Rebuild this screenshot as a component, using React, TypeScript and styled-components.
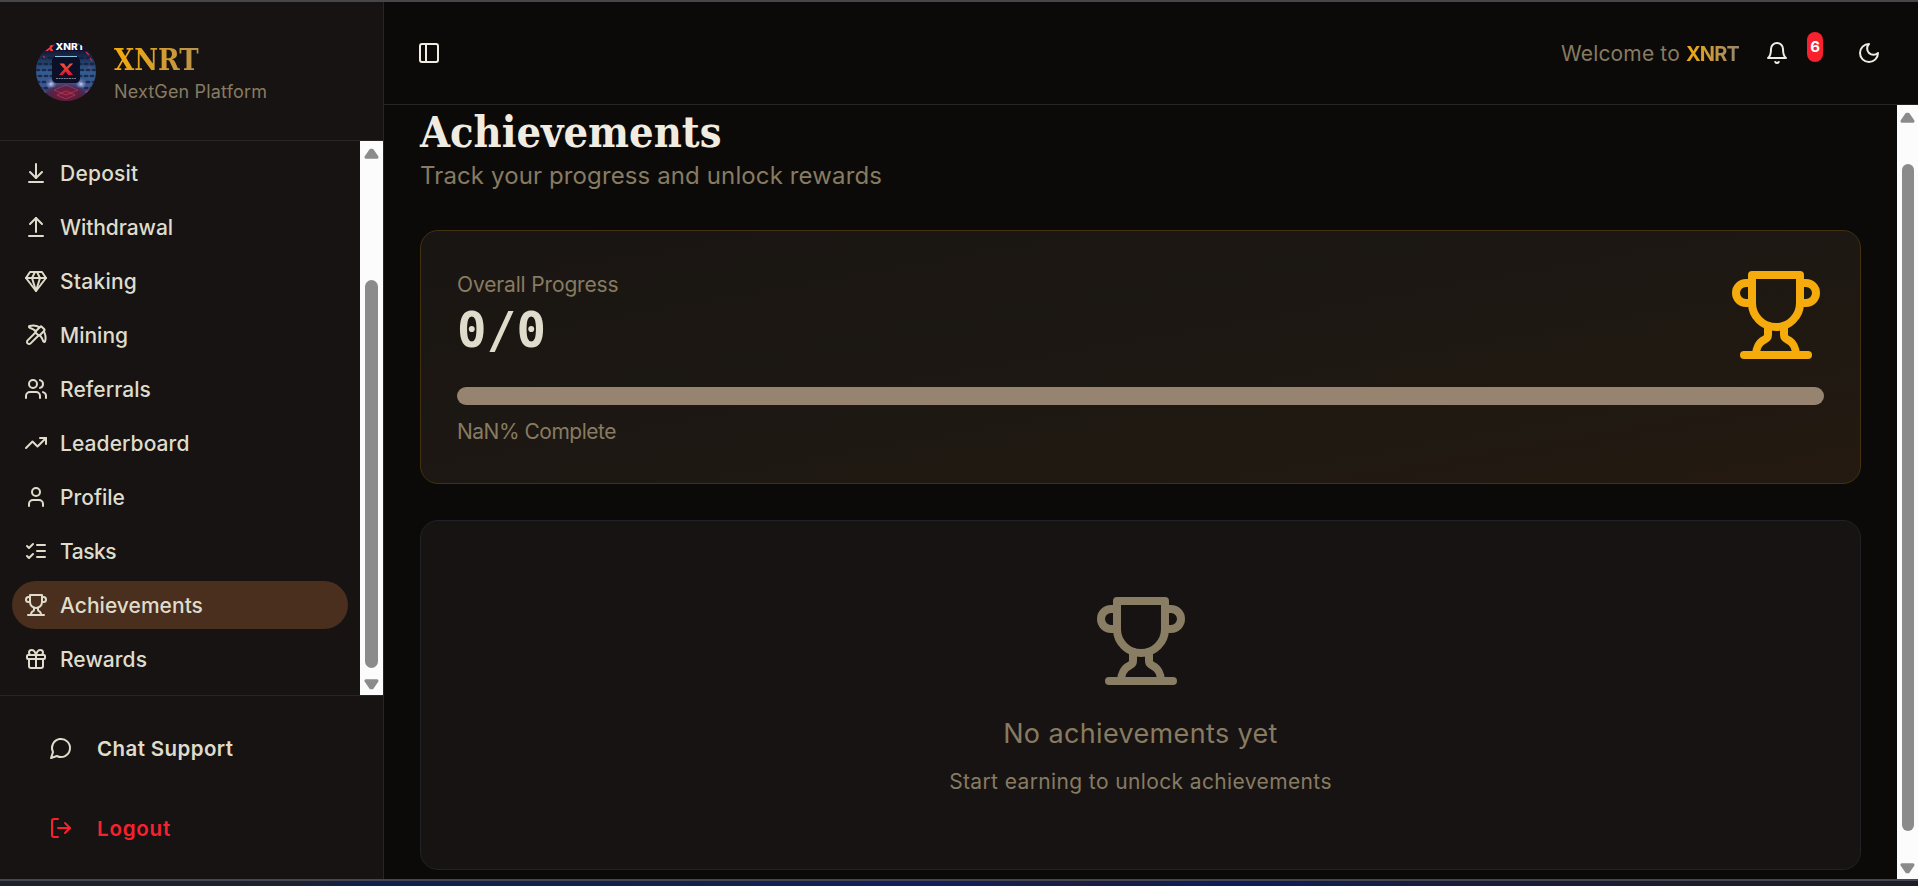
import React from 'react';
import styled, { createGlobalStyle, css } from 'styled-components';

const color = {
  page: '#0b0a08',
  panel: '#171312',
  line: '#2a2423',
  text: '#dfdccb',
  bright: '#f0ece2',
  muted: '#877b61',
  amber: '#f5ab0c',
  red: '#f8212e',
  active: '#4a2e1e',
  track: '#978470',
};

const GlobalStyle = createGlobalStyle`
  *, *::before, *::after { box-sizing: border-box; }
  body { margin: 0; background: ${color.page}; font-family: Inter, sans-serif; overflow: hidden; }
  h1, p { margin: 0; }
`;

const Window = styled.div`
  display: flex;
  flex-direction: column;
  height: 886px;
  width: 1918px;
  border-top: 2px solid #45474b;
  color: ${color.text};
`;

const Shell = styled.div`
  display: flex;
  flex: none;
  height: 877px;
`;

const Taskbar = styled.div`
  flex: 1;
  border-top: 2px solid #45464f;
  background: linear-gradient(90deg, #1c222b 0, #1a2230 300px, #10204f 370px, #14204c 700px, #10205e 920px, #1b1d40 1080px, #0d1d5a 1230px, #181d40 1400px, #1c1d2b 1700px, #1c1c28 100%);
`;

const Sidebar = styled.aside`
  display: flex;
  flex-direction: column;
  width: 384px;
  background: ${color.panel};
  border-right: 1px solid ${color.line};
`;

const Brand = styled.div`
  display: flex;
  align-items: center;
  gap: 18px;
  height: 139px;
  padding: 0 36px;
  border-bottom: 1px solid ${color.line};
`;

const BrandText = styled.div`
  display: flex;
  flex-direction: column;
  padding-top: 3px;
`;

const goldText = css`
  background: linear-gradient(90deg, #f5ab0c, #978470);
  -webkit-background-clip: text;
  background-clip: text;
  color: transparent;
`;

const BrandName = styled.span`
  ${goldText}
  width: 130px;
  font: 700 29px/38px 'DejaVu Serif Condensed', 'DejaVu Serif', serif;
`;

const BrandTag = styled.span`
  font-size: 18px;
  line-height: 26px;
  letter-spacing: 0.16px;
  color: ${color.muted};
`;

const NavArea = styled.div`
  display: flex;
  height: 554px;
`;

const NavList = styled.nav`
  display: flex;
  flex: 1;
  flex-direction: column;
  gap: 6px;
  padding: 8px 12px 12px;
`;

const NavItem = styled.a<{ $active?: boolean; $spacing: number }>`
  display: flex;
  align-items: center;
  gap: 12px;
  height: 48px;
  padding: 0 12px;
  border-radius: 24px;
  font-size: 21px;
  font-weight: 500;
  letter-spacing: ${(p) => p.$spacing}px;
  background: ${(p) => (p.$active ? color.active : 'transparent')};
`;

const SidebarFooter = styled.div`
  display: flex;
  flex: 1;
  flex-direction: column;
  gap: 20px;
  padding: 22px 24px 0;
  border-top: 1px solid ${color.line};
`;

const FooterButton = styled.button<{ $danger?: boolean; $spacing: number }>`
  display: flex;
  align-items: center;
  gap: 24px;
  height: 60px;
  padding: 0 25px;
  border: 0;
  background: none;
  font: 600 20.5px Inter, sans-serif;
  letter-spacing: ${(p) => p.$spacing}px;
  color: ${(p) => (p.$danger ? color.red : color.text)};
`;

const Main = styled.div`
  display: flex;
  flex: 1;
  flex-direction: column;
  background: ${color.page};
`;

const TopBar = styled.header`
  display: flex;
  align-items: center;
  justify-content: space-between;
  height: 103px;
  padding: 0 22px 0 18px;
  border-bottom: 1px solid ${color.line};
`;

const TopActions = styled.div`
  display: flex;
  align-items: center;
`;

const Welcome = styled.p`
  margin-right: 11px;
  font-size: 21px;
  letter-spacing: 0.16px;
  color: ${color.muted};
`;

const WelcomeName = styled.span`
  ${goldText}
  display: inline-block;
  width: 53px;
  font-size: 20px;
  font-weight: 700;
  letter-spacing: -0.9px;
`;

const IconButton = styled.button`
  position: relative;
  display: flex;
  align-items: center;
  justify-content: center;
  width: 54px;
  height: 54px;
  padding: 0;
  border: 0;
  background: none;
  color: ${color.bright};
`;

const BellButton = styled(IconButton)`
  margin-right: 38px;
`;

const Badge = styled.span`
  position: absolute;
  top: 6px;
  left: 57px;
  width: 16px;
  height: 30px;
  border-radius: 8px;
  background: ${color.red};
  color: #fff;
  text-align: center;
  font: 700 15px/30px Inter, sans-serif;
`;

const Viewport = styled.div`
  display: flex;
  flex: 1;
  min-height: 0;
`;

const Content = styled.main`
  display: flex;
  flex: 1;
  flex-direction: column;
  gap: 36px;
  padding: 1px 36px 0;
`;

const Title = styled.h1`
  font: 700 43px/52px 'DejaVu Serif Condensed', 'DejaVu Serif', serif;
  color: ${color.bright};
`;

const Subtitle = styled.p`
  font-size: 24px;
  line-height: 36px;
  letter-spacing: 0.12px;
  color: ${color.muted};
`;

const ProgressCard = styled.section`
  height: 254px;
  padding: 36px;
  border: 1px solid #43310f;
  border-radius: 18px;
  background: linear-gradient(to bottom right, #191513, #1d1812 55%, #241a11);
`;

const ProgressHead = styled.div`
  display: flex;
  align-items: center;
  justify-content: space-between;
  height: 96px;
`;

const Caption = styled.p<{ $spacing: number }>`
  font-size: 21px;
  line-height: 30px;
  letter-spacing: ${(p) => p.$spacing}px;
  color: ${color.muted};
`;

const Count = styled.p`
  padding-top: 2px;
  font: 700 49px/58px 'DejaVu Sans Mono', monospace;
  letter-spacing: 0.3px;
`;

const Bar = styled.div`
  height: 18px;
  margin: 24px 0 12px;
  border-radius: 9px;
  background: ${color.track};
`;

const EmptyCard = styled.section`
  display: flex;
  flex-direction: column;
  align-items: center;
  height: 350px;
  padding: 72px 36px;
  border: 1px solid #212228;
  border-radius: 18px;
  background: ${color.panel};
`;

const EmptyTitle = styled.p`
  margin: 24px 0 12px;
  font-size: 27px;
  line-height: 42px;
  letter-spacing: 0.36px;
  color: ${color.muted};
`;

const Rail = styled.div<{ $width: number }>`
  display: flex;
  flex: none;
  flex-direction: column;
  align-items: center;
  width: ${(p) => p.$width}px;
  padding: 7px 0 5px;
  background: #fcfcfc;
`;

const Thumb = styled.div<{ $width: number; $top: number; $height: number }>`
  width: ${(p) => p.$width}px;
  height: ${(p) => p.$height}px;
  margin: ${(p) => p.$top}px 0 auto;
  border-radius: 7px;
  background: #8b8b8b;
`;

const Svg = styled.svg`
  display: block;
  flex: none;
`;

const Arrow = ({ down }: { down?: boolean }) => (
  <Svg width="15" height="11" viewBox="0 0 15 11">
    <path
      d={down ? 'M2 1.800h11L8.200 8.800h-1.400Z' : 'M2 9.200h11L8.200 2.200h-1.400Z'}
      fill="#8b8b8b"
      stroke="#8b8b8b"
      strokeWidth="3"
      strokeLinejoin="round"
    />
  </Svg>
);

const shapes = {
  deposit: ['M12 17V3', 'm6 11 6 6 6-6', 'M19 21H5'],
  withdrawal: ['m18 9-6-6-6 6', 'M12 3v14', 'M5 21h14'],
  gem: ['M6 3h12l4 6-10 13L2 9Z', 'M11 3 8 9l4 13 4-13-3-6', 'M2 9h20'],
  pickaxe: [
    'M14.531 12.469 6.619 20.38a1 1 0 1 1-3-3l7.912-7.912',
    'M15.686 4.314A12.5 12.5 0 0 0 5.461 2.958 1 1 0 0 0 5.58 4.71a22 22 0 0 1 6.318 3.393',
    'M17.7 3.7a1 1 0 0 0-1.4 0l-4.6 4.6a1 1 0 0 0 0 1.4l2.6 2.6a1 1 0 0 0 1.4 0l4.6-4.6a1 1 0 0 0 0-1.4z',
    'M19.686 8.314a12.501 12.501 0 0 1 1.356 10.225 1 1 0 0 1-1.751-.119 22 22 0 0 0-3.393-6.319',
  ],
  users: [
    'M16 21v-2a4 4 0 0 0-4-4H6a4 4 0 0 0-4 4v2',
    'M13 7a4 4 0 1 1-8 0a4 4 0 0 1 8 0',
    'M22 21v-2a4 4 0 0 0-3-3.87',
    'M16 3.13a4 4 0 0 1 0 7.75',
  ],
  trend: ['m22 7-8.5 8.5-5-5L2 17', 'M16 7h6v6'],
  user: ['M19 21v-2a4 4 0 0 0-4-4H9a4 4 0 0 0-4 4v2', 'M16 7a4 4 0 1 1-8 0a4 4 0 0 1 8 0'],
  tasks: ['m3 17 2 2 4-4', 'm3 7 2 2 4-4', 'M13 6h8', 'M13 12h8', 'M13 18h8'],
  trophy: [
    'M6 9H4.5a2.5 2.5 0 0 1 0-5H6',
    'M18 9h1.5a2.5 2.5 0 0 0 0-5H18',
    'M4 22h16',
    'M10 14.66V17c0 .55-.47.98-.97 1.21C7.85 18.75 7 20.24 7 22',
    'M14 14.66V17c0 .55.47.98.97 1.21C16.15 18.75 17 20.24 17 22',
    'M18 2H6v7a6 6 0 0 0 12 0V2Z',
  ],
  gift: [
    'M4 8h16a1 1 0 0 1 1 1v2a1 1 0 0 1-1 1H4a1 1 0 0 1-1-1V9a1 1 0 0 1 1-1Z',
    'M12 8v13',
    'M19 12v7a2 2 0 0 1-2 2H7a2 2 0 0 1-2-2v-7',
    'M7.5 8a2.5 2.5 0 0 1 0-5A4.8 8 0 0 1 12 8a4.8 8 0 0 1 4.5-5 2.5 2.5 0 0 1 0 5',
  ],
  chat: ['M7.9 20A9 9 0 1 0 4 16.1L2 22Z'],
  logout: ['M9 21H5a2 2 0 0 1-2-2V5a2 2 0 0 1 2-2h4', 'm16 17 5-5-5-5', 'M21 12H9'],
  panel: ['M5 3h14a2 2 0 0 1 2 2v14a2 2 0 0 1-2 2H5a2 2 0 0 1-2-2V5a2 2 0 0 1 2-2Z', 'M9 3v18'],
  bell: ['M6 8a6 6 0 0 1 12 0c0 7 3 9 3 9H3s3-2 3-9', 'M10.3 21a1.94 1.94 0 0 0 3.4 0'],
  moon: ['M12 3a6 6 0 0 0 9 9 9 9 0 1 1-9-9Z'],
};

const Icon = ({ name, size = 24, stroke = 'currentColor' }: { name: keyof typeof shapes; size?: number; stroke?: string }) => (
  <Svg width={size} height={size} viewBox="0 0 24 24" fill="none" stroke={stroke} strokeWidth="2" strokeLinecap="round" strokeLinejoin="round">
    {shapes[name].map((d) => (
      <path key={d} d={d} />
    ))}
  </Svg>
);

const scales = [0, 1, 2, 3, 4, 5].flatMap((row) =>
  [0, 1, 2].flatMap((col) => [
    { x: 2 + col * 6 + (row % 2) * 2, y: 17 + row * 6 },
    { x: 58 - col * 6 - (row % 2) * 2, y: 17 + row * 6 },
  ]),
);

const Logo = () => (
  <Svg width="60" height="60" viewBox="0 0 60 60">
    <defs>
      <clipPath id="disc"><circle cx="30" cy="30" r="30" /></clipPath>
      <linearGradient id="sky" x1="0" y1="0" x2="0" y2="1">
        <stop offset="0" stopColor="#0d1230" />
        <stop offset="0.2" stopColor="#15203f" />
        <stop offset="0.5" stopColor="#335c8e" />
        <stop offset="0.75" stopColor="#3b5590" />
        <stop offset="1" stopColor="#2a1c3c" />
      </linearGradient>
      <radialGradient id="glow">
        <stop offset="0" stopColor="#8d1836" />
        <stop offset="0.6" stopColor="#641a3a" stopOpacity="0.85" />
        <stop offset="1" stopColor="#4b2250" stopOpacity="0" />
      </radialGradient>
      <radialGradient id="lamp">
        <stop offset="0" stopColor="#cfd0f4" />
        <stop offset="1" stopColor="#7d8fd0" stopOpacity="0" />
      </radialGradient>
      <linearGradient id="mark" x1="0" y1="0" x2="0" y2="1">
        <stop offset="0" stopColor="#f8532f" />
        <stop offset="1" stopColor="#dd1638" />
      </linearGradient>
    </defs>
    <g clipPath="url(#disc)">
      <rect width="60" height="60" fill="url(#sky)" />
      {scales.map((s) => (
        <ellipse key={`${s.x}-${s.y}`} cx={s.x} cy={s.y} rx="2.6" ry="1.2" fill="#101c3c" opacity="0.75" />
      ))}
      <ellipse cx="30" cy="53" rx="23" ry="12" fill="url(#glow)" />
      <circle cx="15" cy="43" r="5.500" fill="url(#lamp)" />
      <circle cx="45" cy="43" r="5.500" fill="url(#lamp)" />
      <path d="M18 49l12-5 12 5-12 5ZM21 54l9-4 9 4-9 4Z" fill="none" stroke="#e07a98" strokeWidth="0.6" opacity="0.5" />
      <path d="M50 11l3 3M54 17l2 3M7 15l2 2M52 26l3 1M5 50l5 1M49 51l4-1" stroke="#c52e4d" strokeWidth="1.3" />
      <rect width="60" height="10" fill="#0e1230" />
      <rect x="16" y="15" width="28" height="27" rx="4.5" fill="#0b1026" />
      <path d="M19 15.5h22" stroke="#8fc1dc" strokeWidth="1" />
      <path d="M23.500 22.500h4.500l2.500 3.700 3.500-3.700h3.200l-5.200 5.600 5 6h-4.800l-2.500-3.700-3.200 3.700H23l5.300-6Z" fill="url(#mark)" />
      <path d="M20 37.500h20" stroke="#b9bccb" strokeWidth="0.800" strokeDasharray="2 0.600" opacity="0.800" />
      <path d="M9 10l5-4-2-3h3l1.500 1.500L19 3l-3.500 4 2 3h-3l-1-1.500L12 10Z" fill="#ee3b36" />
      <text x="19.500" y="9.200" fill="#fff" fontFamily="Inter, sans-serif" fontWeight="800" fontSize="9.300" textLength="29" lengthAdjust="spacingAndGlyphs">XNRT</text>
    </g>
  </Svg>
);

const navItems: { label: string; icon: keyof typeof shapes; spacing: number; active?: boolean }[] = [
  { label: 'Deposit', icon: 'deposit', spacing: 0.22 },
  { label: 'Withdrawal', icon: 'withdrawal', spacing: -0.07 },
  { label: 'Staking', icon: 'gem', spacing: 0.23 },
  { label: 'Mining', icon: 'pickaxe', spacing: 0 },
  { label: 'Referrals', icon: 'users', spacing: 0.07 },
  { label: 'Leaderboard', icon: 'trend', spacing: 0.08 },
  { label: 'Profile', icon: 'user', spacing: 0 },
  { label: 'Tasks', icon: 'tasks', spacing: -0.45 },
  { label: 'Achievements', icon: 'trophy', spacing: 0.03, active: true },
  { label: 'Rewards', icon: 'gift', spacing: 0.05 },
];

export default function App() {
  return (
    <Window>
      <GlobalStyle />
      <Shell>
        <Sidebar>
          <Brand>
            <Logo />
            <BrandText>
              <BrandName>XNRT</BrandName>
              <BrandTag>NextGen Platform</BrandTag>
            </BrandText>
          </Brand>
          <NavArea>
            <NavList>
              {navItems.map((item) => (
                <NavItem key={item.label} $active={item.active} $spacing={item.spacing}>
                  <Icon name={item.icon} />
                  {item.label}
                </NavItem>
              ))}
            </NavList>
            <Rail $width={23}>
              <Arrow />
              <Thumb $width={13} $top={121} $height={388} />
              <Arrow down />
            </Rail>
          </NavArea>
          <SidebarFooter>
            <FooterButton $spacing={0.4}>
              <Icon name="chat" />
              Chat Support
            </FooterButton>
            <FooterButton $danger $spacing={0.8}>
              <Icon name="logout" />
              Logout
            </FooterButton>
          </SidebarFooter>
        </Sidebar>
        <Main>
          <TopBar>
            <IconButton>
              <Icon name="panel" />
            </IconButton>
            <TopActions>
              <Welcome>
                Welcome to <WelcomeName>XNRT</WelcomeName>
              </Welcome>
              <BellButton>
                <Icon name="bell" />
                <Badge>6</Badge>
              </BellButton>
              <IconButton>
                <Icon name="moon" />
              </IconButton>
            </TopActions>
          </TopBar>
          <Viewport>
            <Content>
              <div>
                <Title>Achievements</Title>
                <Subtitle>Track your progress and unlock rewards</Subtitle>
              </div>
              <ProgressCard>
                <ProgressHead>
                  <div>
                    <Caption $spacing={-0.15}>Overall Progress</Caption>
                    <Count>0/0</Count>
                  </div>
                  <Icon name="trophy" size={96} stroke={color.amber} />
                </ProgressHead>
                <Bar />
                <Caption $spacing={-0.5}>NaN% Complete</Caption>
              </ProgressCard>
              <EmptyCard>
                <Icon name="trophy" size={96} stroke="#897e63" />
                <EmptyTitle>No achievements yet</EmptyTitle>
                <Caption $spacing={0.38}>Start earning to unlock achievements</Caption>
              </EmptyCard>
            </Content>
            <Rail $width={21}>
              <Arrow />
              <Thumb $width={12} $top={41} $height={667} />
              <Arrow down />
            </Rail>
          </Viewport>
        </Main>
      </Shell>
      <Taskbar />
    </Window>
  );
}
